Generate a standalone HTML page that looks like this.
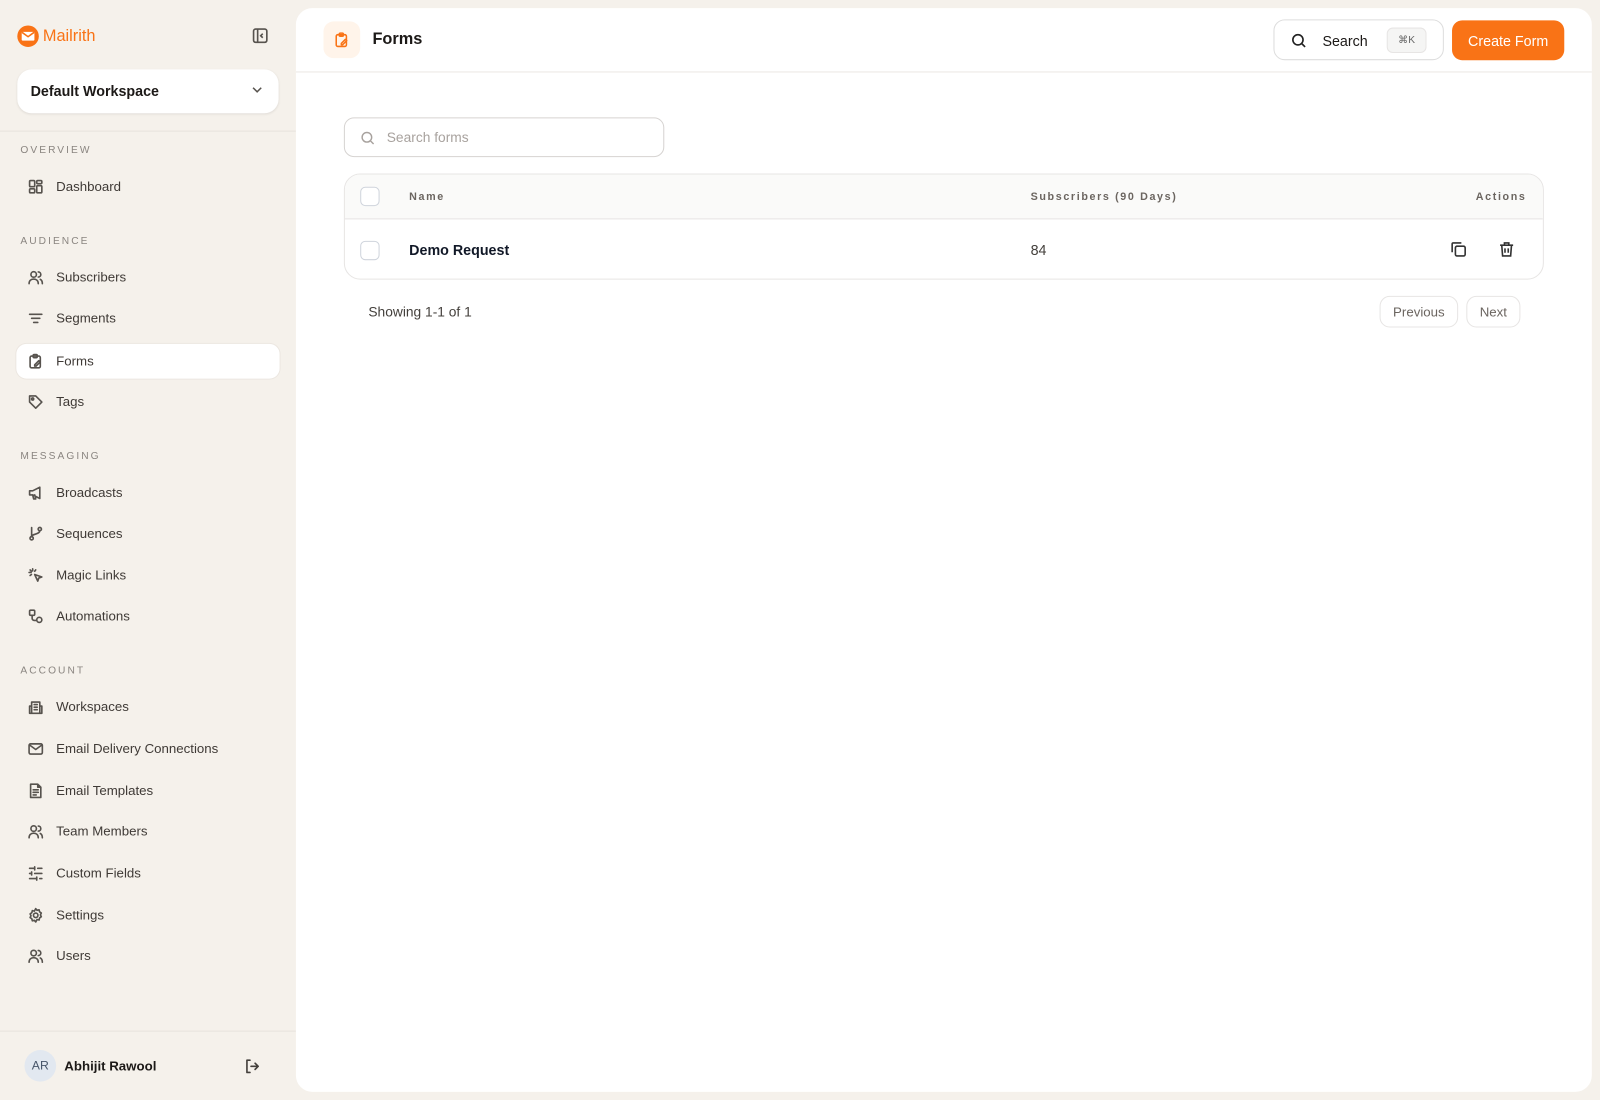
<!DOCTYPE html>
<html><head><meta charset="utf-8"><style>
*{box-sizing:border-box;margin:0;padding:0}
html,body{width:1600px;height:1100px;overflow:hidden}
body{background:#f5f1eb;font-family:"Liberation Sans",sans-serif;color:#1c1917;position:relative}
.wrap{position:absolute;left:0;top:0;width:1568px;height:1078px;transform:scale(1.0204);transform-origin:0 0}
.sb{position:absolute;left:0;top:0;width:290px;height:1078px}
.logo{position:absolute;left:16px;top:24px;display:flex;align-items:center;color:#f97316;font-size:16px}
.ws{position:absolute;left:17px;top:68px;width:256px;height:43px;background:#fff;border-radius:14px;box-shadow:0 1px 2px rgba(0,0,0,.08);font-weight:bold;font-size:14px;padding:13px 13px;}
.hr{position:absolute;left:0;width:290px;height:1px;background:#e7e2dc}
.sec{position:absolute;left:20px;font-size:10px;letter-spacing:2px;color:#8a8580}
.it{position:absolute;left:16px;width:258px;height:34px;display:flex;align-items:center;font-size:13px;color:#3f3a36;border-radius:10px}
.it svg{position:absolute;left:11px;width:16px;height:16px;fill:none;stroke:#57534e;stroke-width:1.6;stroke-linecap:round;stroke-linejoin:round}
.it span{position:absolute;left:39px;top:9px}
.it.act{background:#fff;box-shadow:0 0 0 1px #ece7e1}
.main{position:absolute;left:290px;top:8px;width:1270px;height:1062px;background:#fff;border-radius:16px}
.top{height:63px;border-bottom:1px solid #ebe8e4;position:relative}
.ic{position:absolute;left:27px;top:13px;width:36px;height:36px;background:#fff4ea;border-radius:10px}
.ttl{position:absolute;left:75px;top:22px;font-size:16px;font-weight:bold}
.srch{position:absolute;left:958px;top:11px;width:167px;height:40px;border:1px solid #ddd;border-radius:11px}
.kbd{position:absolute;left:110px;top:7px;width:39px;height:25px;background:#f5f5f4;border:1px solid #e7e5e4;border-radius:6px;font-size:10px;color:#666;text-align:center;line-height:23px}
.btn{position:absolute;left:1133px;top:12px;width:110px;height:39px;background:#f97316;border-radius:10px;color:#fff;font-size:14px;text-align:center;line-height:40px}
.fs{position:absolute;left:47px;top:107px;width:314px;height:39px;border:1px solid #d6d3d1;border-radius:10px;font-size:13.5px;color:#a8a29e}
.tbl{position:absolute;left:47px;top:162px;width:1176px;height:104px;border:1px solid #e7e5e4;border-radius:16px;overflow:hidden}
.th{height:44px;background:#fafaf9;border-bottom:1px solid #e7e5e4;position:relative;font-size:10.5px;font-weight:bold;letter-spacing:1.6px;color:#6b6560}
.cb{position:absolute;left:15px;width:19px;height:19px;border:1px solid #cfd4dc;border-radius:5px;background:#fff}
.pg{position:absolute;top:282px;height:31px;border:1px solid #e7e5e4;border-radius:10px;font-size:13px;color:#6b6560;text-align:center;line-height:30px}
</style></head><body><div class="wrap">
<div class="sb">
 <div class="logo"><svg width="23" height="23" viewBox="0 0 24 24"><circle cx="12" cy="12" r="11" fill="#f97316"/><rect x="5.5" y="7.5" width="13" height="9" rx="1" fill="#fff"/><path d="M5.8 8l6.2 4.5L18.2 8" stroke="#f97316" stroke-width="1.6" fill="none"/></svg><span style="margin-left:3px">Mailrith</span></div>
 <svg style="position:absolute;left:247px;top:27px" width="16" height="16" viewBox="0 0 16 16" fill="none" stroke="#57534e" stroke-width="1.6"><rect x="1.5" y="1.5" width="13" height="13" rx="2"/><path d="M5.5 1.5v13M10.5 6l-2 2 2 2"/></svg>
 <div class="ws">Default Workspace<svg style="position:absolute;right:15px;top:16px" width="12" height="8" viewBox="0 0 12 8" fill="none" stroke="#57534e" stroke-width="1.5"><path d="M2 2l4 4 4-4"/></svg></div>
 <div class="hr" style="top:128px"></div>
 <div class="sec" style="top:142px">OVERVIEW</div>
 <div class="it" style="top:166px"><svg viewBox="0 0 16 16"><rect x="2" y="2" width="5" height="6" rx="1"/><rect x="9" y="2" width="5" height="3" rx="1"/><rect x="2" y="10" width="5" height="4" rx="1"/><rect x="9" y="7" width="5" height="7" rx="1"/></svg><span>Dashboard</span></div>
 <div class="sec" style="top:231px">AUDIENCE</div>
 <div class="it" style="top:255px"><svg viewBox="0 0 16 16"><circle cx="6" cy="5" r="2.7"/><path d="M1.5 14c0-3 2-4.5 4.5-4.5s4.5 1.5 4.5 4.5M10.5 2.5a2.5 2.5 0 010 5M12.5 9.8c1.3.6 2 2 2 4.2"/></svg><span>Subscribers</span></div>
 <div class="it" style="top:295px"><svg viewBox="0 0 16 16"><path d="M2 4h12M4 8h8M6 12h4"/></svg><span>Segments</span></div>
 <div class="it act" style="top:337px"><svg viewBox="0 0 16 16"><rect x="2.5" y="3" width="10" height="11.5" rx="1.5"/><rect x="5.5" y="1.5" width="4" height="3" rx="1"/><path d="M7 11.5l4-4 1.3 1.3-4 4H7z"/></svg><span>Forms</span></div>
 <div class="it" style="top:377px"><svg viewBox="0 0 16 16"><path d="M2 2h6l6 6-6 6-6-6z"/><circle cx="5" cy="5" r="1"/></svg><span>Tags</span></div>
 <div class="sec" style="top:442px">MESSAGING</div>
 <div class="it" style="top:466px"><svg viewBox="0 0 16 16"><path d="M2 6h3l7-3.5v11L5 10H2zM5 10l1 4h2l-1-4"/></svg><span>Broadcasts</span></div>
 <div class="it" style="top:506px"><svg viewBox="0 0 16 16"><circle cx="4" cy="12.5" r="1.6"/><circle cx="12" cy="3.5" r="1.6"/><path d="M4 2v9M12 5c0 4-8 3-8 6"/></svg><span>Sequences</span></div>
 <div class="it" style="top:547px"><svg viewBox="0 0 16 16"><path d="M7 7l7 2.5-3 1-1 3zM5 1.5v2M1.5 5h2M2.5 2.5l1.3 1.3M8 2.5L7 3.8M2.5 8l1.3-1"/></svg><span>Magic Links</span></div>
 <div class="it" style="top:587px"><svg viewBox="0 0 16 16"><rect x="2" y="2" width="5" height="5" rx="1"/><circle cx="11.5" cy="11.5" r="2.5"/><path d="M4.5 7v3a2 2 0 002 2H9"/></svg><span>Automations</span></div>
 <div class="sec" style="top:652px">ACCOUNT</div>
 <div class="it" style="top:676px"><svg viewBox="0 0 16 16"><path d="M4 14V3h8v11M2 14h12M4 7H2v7M12 7h2v7M6.5 5.5h3M6.5 8h3M6.5 10.5h3"/></svg><span>Workspaces</span></div>
 <div class="it" style="top:717px"><svg viewBox="0 0 16 16"><rect x="1.5" y="3" width="13" height="10" rx="1.5"/><path d="M1.8 4l6.2 4.5L14.2 4"/></svg><span>Email Delivery Connections</span></div>
 <div class="it" style="top:758px"><svg viewBox="0 0 16 16"><path d="M3 1.5h7l3 3v10H3zM10 1.5v3h3M5.5 7h5M5.5 9.5h5M5.5 12h3"/></svg><span>Email Templates</span></div>
 <div class="it" style="top:798px"><svg viewBox="0 0 16 16"><circle cx="6" cy="5" r="2.7"/><path d="M1.5 14c0-3 2-4.5 4.5-4.5s4.5 1.5 4.5 4.5M10.5 2.5a2.5 2.5 0 010 5M12.5 9.8c1.3.6 2 2 2 4.2"/></svg><span>Team Members</span></div>
 <div class="it" style="top:839px"><svg viewBox="0 0 16 16"><path d="M2 3h5M10 3h4M2 8h2M7 8h7M2 13h7M12 13h2M7 1.5v3M4 6.5v3M9 11.5v3"/></svg><span>Custom Fields</span></div>
 <div class="it" style="top:880px"><svg viewBox="0 0 16 16"><circle cx="8" cy="8" r="2.2"/><path d="M8 1.5l1.3 1.6 2-.5.5 2 1.7 1.2-.9 1.8.9 1.8-1.7 1.2-.5 2-2-.5L8 14.5l-1.3-1.6-2 .5-.5-2-1.7-1.2.9-1.8-.9-1.8 1.7-1.2.5-2 2 .5z"/></svg><span>Settings</span></div>
 <div class="it" style="top:920px"><svg viewBox="0 0 16 16"><circle cx="6" cy="5" r="2.7"/><path d="M1.5 14c0-3 2-4.5 4.5-4.5s4.5 1.5 4.5 4.5M10.5 2.5a2.5 2.5 0 010 5M12.5 9.8c1.3.6 2 2 2 4.2"/></svg><span>Users</span></div>
 <div class="hr" style="top:1010px"></div>
 <div style="position:absolute;left:24px;top:1029px;width:31px;height:31px;border-radius:50%;background:#e2e8f0;color:#475569;font-size:12px;text-align:center;line-height:31px">AR</div>
 <div style="position:absolute;left:63px;top:1037px;font-size:13px;font-weight:bold">Abhijit Rawool</div>
 <svg style="position:absolute;left:239px;top:1037px" width="16" height="16" viewBox="0 0 16 16" fill="none" stroke="#44403c" stroke-width="1.6" stroke-linecap="round" stroke-linejoin="round"><path d="M6 2H3v12h3M7 8h7M11 5l3 3-3 3"/></svg>
</div>
<div class="main">
 <div class="top">
  <div class="ic"><svg style="position:absolute;left:10px;top:10px" width="16" height="16" viewBox="0 0 16 16" fill="none" stroke="#f97316" stroke-width="1.5" stroke-linejoin="round"><rect x="2.5" y="3" width="10" height="11.5" rx="1.5"/><rect x="5.5" y="1.5" width="4" height="3" rx="1"/><path d="M7.5 11.5l4-4 1.3 1.3-4 4H7.5z"/></svg></div>
  <div class="ttl">Forms</div>
  <div class="srch"><svg style="position:absolute;left:16px;top:12px" width="16" height="16" viewBox="0 0 16 16" fill="none" stroke="#222" stroke-width="1.6"><circle cx="7" cy="7" r="5"/><path d="M11 11l3 3"/></svg><span style="position:absolute;left:47px;top:12px;font-size:14px">Search</span><div class="kbd">⌘K</div></div>
  <div class="btn">Create Form</div>
 </div>
 <div class="fs"><svg style="position:absolute;left:15px;top:12px" width="15" height="15" viewBox="0 0 16 16" fill="none" stroke="#a8a29e" stroke-width="1.5"><circle cx="7" cy="7" r="5"/><path d="M11 11l3 3"/></svg><span style="position:absolute;left:41px;top:11px">Search forms</span></div>
 <div class="tbl">
  <div class="th"><div class="cb" style="top:12px"></div><span style="position:absolute;left:63px;top:16px">Name</span><span style="position:absolute;left:672px;top:16px">Subscribers (90 Days)</span><span style="position:absolute;right:16px;top:16px">Actions</span></div>
  <div style="position:relative;height:59px"><div class="cb" style="top:21px"></div><span style="position:absolute;left:63px;top:22px;font-size:14px;font-weight:bold;color:#111827">Demo Request</span><span style="position:absolute;left:672px;top:22px;font-size:14px;color:#44403c">84</span>
  <svg style="position:absolute;left:1083px;top:21px" width="17" height="17" viewBox="0 0 16 16" fill="none" stroke="#333" stroke-width="1.5"><rect x="5" y="5" width="9" height="9" rx="1.5"/><path d="M2 10.5V3a1 1 0 011-1h7.5"/></svg>
  <svg style="position:absolute;left:1130px;top:21px" width="17" height="17" viewBox="0 0 16 16" fill="none" stroke="#333" stroke-width="1.5"><path d="M2 4h12M6 4V2h4v2M3.5 4l.8 10h7.4l.8-10M6.5 7v4M9.5 7v4"/></svg></div>
 </div>
 <div style="position:absolute;left:71px;top:290px;font-size:13.5px;color:#44403c">Showing 1-1 of 1</div>
 <div class="pg" style="left:1062px;width:77px">Previous</div>
 <div class="pg" style="left:1147px;width:53px">Next</div>
</div>
</div></body></html>
